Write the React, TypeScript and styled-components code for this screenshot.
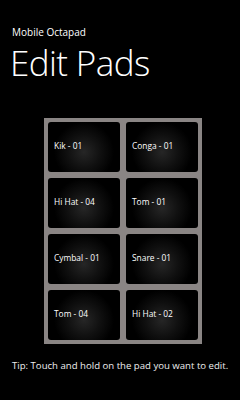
import styled, { createGlobalStyle } from 'styled-components'

const GlobalStyle = createGlobalStyle`
  html, body {
    margin: 0;
    padding: 0;
    background: #000;
  }
  body {
    font-family: "Open Sans", "Liberation Sans", sans-serif;
    color: #fff;
  }
`;

const StyledPage = styled.div`
  width: 240px;
  height: 400px;
  overflow: hidden;
  background: #000;
  display: flex;
  flex-direction: column;
`;

const StyledAppName = styled.div`
  margin: 25px 0 0 12px;
  font-size: 10px;
  line-height: 14px;
`;

const StyledTitle = styled.h1`
  margin: 2px 0 0 10px;
  font-size: 35px;
  font-weight: 300;
  line-height: 44px;
  letter-spacing: -0.6px;
`;

const StyledBoard = styled.div`
  align-self: flex-start;
  margin: 33px 0 0 44px;
  padding: 4px;
  display: grid;
  grid-template-columns: 72px 72px;
  grid-auto-rows: 50px;
  gap: 6px;
  background: #8a8584;
`;

const StyledPad = styled.div`
  border-radius: 3px;
  background: radial-gradient(circle 30px at 36px 30px, #262626 0%, #101010 55%, #000 100%);
  display: flex;
  align-items: center;
  padding: 0 6px 3px;
  font-size: 8.4px;
  color: #fff;
`;

const StyledTip = styled.p`
  margin: 15px 0 0 12px;
  font-size: 9.6px;
  color: #eee;
  white-space: nowrap;
`;

const pads = ['Kik - 01', 'Conga - 01', 'Hi Hat - 04', 'Tom - 01', 'Cymbal - 01', 'Snare - 01', 'Tom - 04', 'Hi Hat - 02'];

function App() {
  return (
    <StyledPage>
      <GlobalStyle />
      <StyledAppName>Mobile Octapad</StyledAppName>
      <StyledTitle>Edit Pads</StyledTitle>
      <StyledBoard>
        {pads.map((p) => (
          <StyledPad key={p}>{p}</StyledPad>
        ))}
      </StyledBoard>
      <StyledTip>Tip: Touch and hold on the pad you want to edit.</StyledTip>
    </StyledPage>
  )
}

export default App
